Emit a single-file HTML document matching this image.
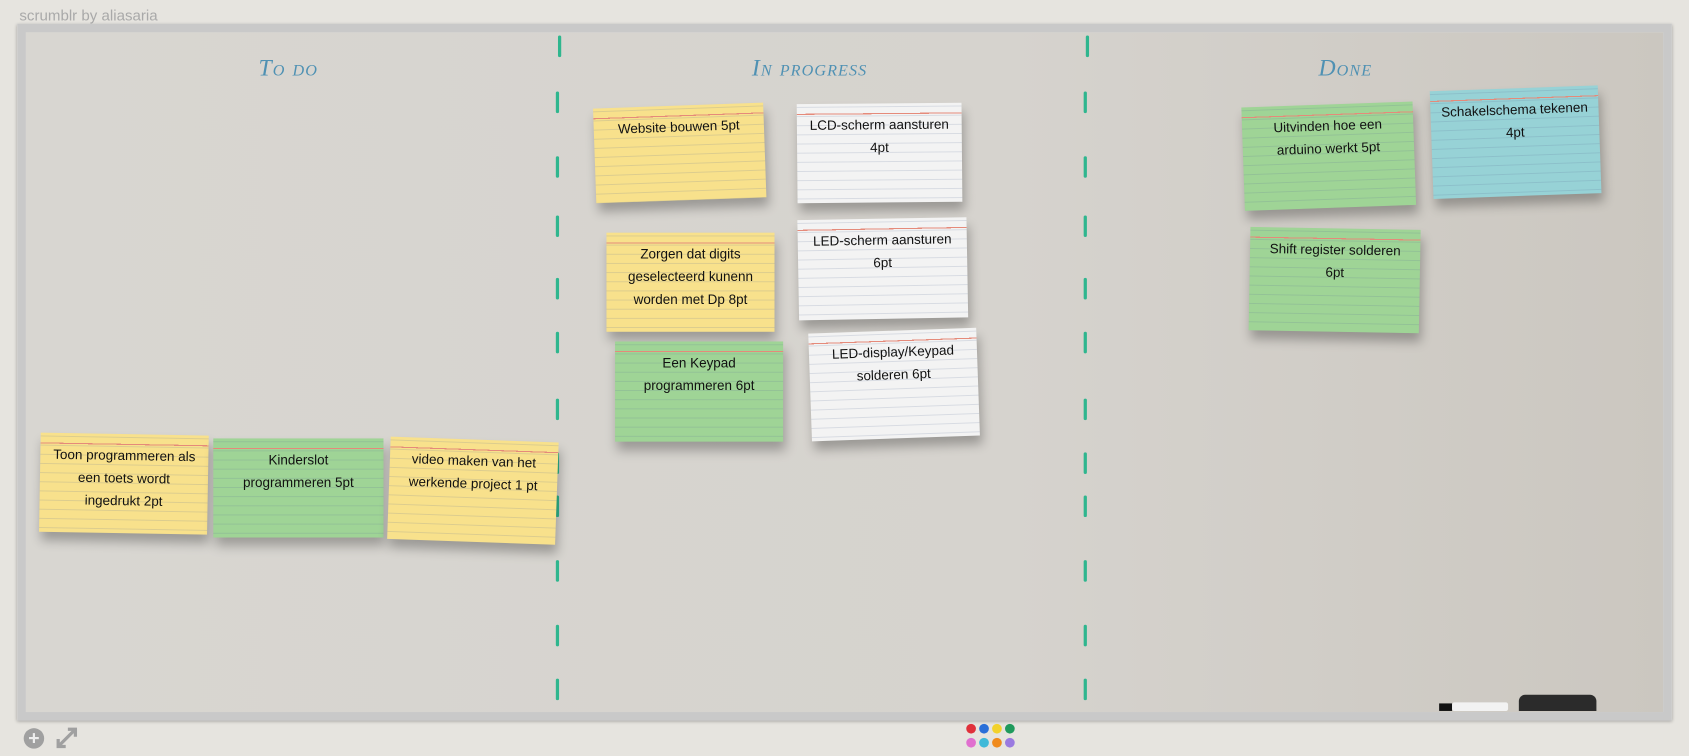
<!DOCTYPE html>
<html><head><meta charset="utf-8"><style>
html,body{margin:0;padding:0;width:1689px;height:756px;overflow:hidden;background:#e6e4df;}
#w{position:absolute;left:0;top:0;width:1568px;height:702px;transform:scale(1.0772);transform-origin:0 0;font-family:"Liberation Sans",sans-serif;}
.title{position:absolute;left:18px;top:6px;font-size:14px;color:#a9a9a9;}
.frame{position:absolute;left:16px;top:22px;width:1520px;height:631px;border:8px solid #c9c9c9;box-shadow:0 1px 3px rgba(0,0,0,.3);background:linear-gradient(90deg,#d8d6d1 0%,#d6d3ce 60%,#cbc7c0 100%);}
.h{position:absolute;top:50px;font-size:22px;color:#4f91b3;font-family:"Liberation Serif",serif;font-style:italic;font-variant:small-caps;letter-spacing:1px;}
.dash{position:absolute;width:3px;height:20px;background:#2fb68e;border-radius:2px;}
.card{position:absolute;box-shadow:2px 8px 10px rgba(0,0,0,.28);font-family:"Liberation Sans",sans-serif;font-size:12.5px;line-height:21px;text-align:center;color:#111;padding-top:10px;box-sizing:border-box;
background-image:linear-gradient(to bottom,transparent 9px,#e58a7a 9px,#e58a7a 10px,transparent 10px),repeating-linear-gradient(to bottom,transparent 0,transparent 7.5px,rgba(90,110,150,.18) 7.5px,rgba(90,110,150,.18) 8.5px);background-size:100% 100%,100% 8.5px;background-position:0 0,0 12px;background-repeat:no-repeat,repeat;}
.y{background-color:#f8e18c}.g{background-color:#9fd496}.wh{background-color:#f3f3f3}.b{background-color:#97d2d6}
.dot{position:absolute;width:9px;height:9px;border-radius:50%;}
</style></head><body><div id="w">
<div class="title">scrumblr by aliasaria</div>
<div class="frame"></div>
<div class="h" style="left:240px">To do</div>
<div class="h" style="left:698px">In progress</div>
<div class="h" style="left:1224px">Done</div>

<div class="dash" style="left:518px;top:33px"></div><div class="dash" style="left:516px;top:85px"></div><div class="dash" style="left:516px;top:145px"></div><div class="dash" style="left:516px;top:200px"></div><div class="dash" style="left:516px;top:258px"></div><div class="dash" style="left:516px;top:308px"></div><div class="dash" style="left:516px;top:370px"></div><div class="dash" style="left:516px;top:420px"></div><div class="dash" style="left:516px;top:460px"></div><div class="dash" style="left:516px;top:520px"></div><div class="dash" style="left:516px;top:580px"></div><div class="dash" style="left:516px;top:630px"></div>
<div class="dash" style="left:1008px;top:33px"></div><div class="dash" style="left:1006px;top:85px"></div><div class="dash" style="left:1006px;top:145px"></div><div class="dash" style="left:1006px;top:200px"></div><div class="dash" style="left:1006px;top:258px"></div><div class="dash" style="left:1006px;top:308px"></div><div class="dash" style="left:1006px;top:370px"></div><div class="dash" style="left:1006px;top:420px"></div><div class="dash" style="left:1006px;top:460px"></div><div class="dash" style="left:1006px;top:520px"></div><div class="dash" style="left:1006px;top:580px"></div><div class="dash" style="left:1006px;top:630px"></div>

<div class="card y" style="left:552px;top:98px;width:158px;height:88px;transform:rotate(-2deg)">Website bouwen 5pt</div>
<div class="card wh" style="left:740px;top:96px;width:153px;height:92px;transform:rotate(-0.5deg)">LCD-scherm aansturen<br>4pt</div>
<div class="card y" style="left:563px;top:216px;width:156px;height:92px">Zorgen dat digits<br>geselecteerd kunenn<br>worden met Dp 8pt</div>
<div class="card wh" style="left:741px;top:203px;width:157px;height:93px;transform:rotate(-1deg)">LED-scherm aansturen<br>6pt</div>
<div class="card g" style="left:571px;top:317px;width:156px;height:93px">Een Keypad<br>programmeren 6pt</div>
<div class="card wh" style="left:752px;top:307px;width:156px;height:100px;transform:rotate(-2deg)">LED-display/Keypad<br>solderen 6pt</div>
<div class="card y" style="left:37px;top:403px;width:156px;height:92px;transform:rotate(1deg)">Toon programmeren als<br>een toets wordt<br>ingedrukt 2pt</div>
<div class="card g" style="left:198px;top:407px;width:158px;height:92px">Kinderslot<br>programmeren 5pt</div>
<div class="card y" style="left:361px;top:408px;width:156px;height:95px;transform:rotate(2deg)">video maken van het<br>werkende project 1 pt</div>
<div class="card g" style="left:1154px;top:97px;width:159px;height:96px;transform:rotate(-2deg)">Uitvinden hoe een<br>arduino werkt 5pt</div>
<div class="card b" style="left:1329px;top:82px;width:156px;height:100px;transform:rotate(-2deg)">Schakelschema tekenen<br>4pt</div>
<div class="card g" style="left:1160px;top:212px;width:158px;height:96px;transform:rotate(1deg)">Shift register solderen<br>6pt</div>

<div style="position:absolute;left:1336px;top:653px;width:12px;height:7px;background:#111"></div>
<div style="position:absolute;left:1348px;top:652px;width:52px;height:8px;background:#f2f2f2;border-radius:2px"></div>
<div style="position:absolute;left:1410px;top:645px;width:72px;height:15px;background:#2b2b2b;border-radius:6px 6px 0 0"></div>

<div style="position:absolute;left:22px;top:676px;width:19px;height:19px;border-radius:50%;background:#a0a0a0;color:#eee;font-weight:bold;font-size:18px;line-height:19px;text-align:center">+</div>
<svg style="position:absolute;left:51px;top:674px" width="22" height="22" viewBox="0 0 22 22"><path d="M3 19 L19 3 M12 3 H19 V10 M3 12 V19 H10" stroke="#a0a0a0" stroke-width="3" fill="none"/></svg>
<div class="dot" style="left:897px;top:672px;background:#e0303a"></div><div class="dot" style="left:909px;top:672px;background:#2a6fd8"></div><div class="dot" style="left:921px;top:672px;background:#f2d22c"></div><div class="dot" style="left:933px;top:672px;background:#1f9a5c"></div>
<div class="dot" style="left:897px;top:685px;background:#e06fcf"></div><div class="dot" style="left:909px;top:685px;background:#3fb9d8"></div><div class="dot" style="left:921px;top:685px;background:#f08a1c"></div><div class="dot" style="left:933px;top:685px;background:#9a7ae0"></div>
</div></body></html>
